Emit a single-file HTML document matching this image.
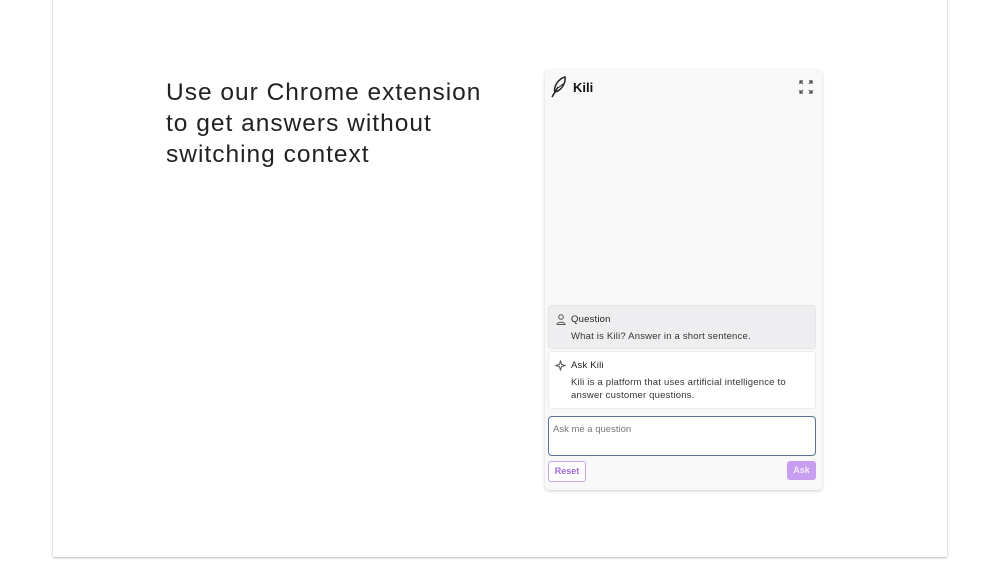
<!DOCTYPE html>
<html><head><style>
body{margin:0;width:1000px;height:563px;background:#fff;position:relative;overflow:hidden;font-family:"Liberation Sans",sans-serif}
.slide{position:absolute;left:53px;top:-2px;width:894px;height:559px;background:#fff;box-shadow:0 1px 2px rgba(0,0,0,.25),0 0 1px rgba(0,0,0,.15)}
.h{position:absolute;left:166px;top:77px;font-size:24.5px;line-height:31px;color:#222;letter-spacing:1px}
.panel{position:absolute;left:545px;top:70px;width:277px;height:420px;background:#f8f8f9;border-radius:4px;box-shadow:0 1px 3px rgba(0,0,0,.2)}
.title{position:absolute;left:28px;top:10px;font-size:13px;font-weight:bold;color:#111}
.box{position:absolute;left:3px;width:266px;border-radius:4px;font-size:9.5px;color:#333;letter-spacing:.2px}
.q{top:235px;height:42px;background:#eeeef0;border:1px solid #e4e4e6}
.a{top:281px;height:56px;background:#fff;border:1px solid #ececee}
.lbl{position:absolute;left:22px;top:8px;color:#222}
.txt{position:absolute;left:22px;top:24px;line-height:13px;width:240px}
.a .txt{width:236px}
.ta{position:absolute;left:3px;top:346px;width:266px;height:38px;border:1.5px solid #5b7290;border-radius:4px;background:#fff;font-size:9.5px;color:#777}
.btn{position:absolute;top:391px;height:19px;border-radius:3px;font-size:9px;font-weight:bold;line-height:19px;text-align:center}
</style></head><body>
<div class="slide"></div>
<div class="h">Use our Chrome extension<br>to get answers without<br>switching context</div>
<div class="panel">
<svg style="position:absolute;left:4px;top:5px" width="20" height="24" viewBox="0 0 20 24"><path d="M3 22 L9 12 M6 18 C4 12 9 4 16 2 C17 8 12 16 6 17" stroke="#222" stroke-width="1.5" fill="none"/><path d="M9 13 L14 9" stroke="#222" stroke-width="1"/></svg>
<div class="title">Kili</div>
<svg style="position:absolute;left:254px;top:10px" width="14" height="14" viewBox="0 0 14 14" stroke="#444" stroke-width="1.2" fill="none"><path d="M1 4V1h3M1 1l3 3M13 4V1h-3M13 1l-3 3M1 10v3h3M1 13l3-3M13 10v3h-3M13 13l-3-3"/></svg>
<div class="box q"><svg style="position:absolute;left:7px;top:8px" width="10" height="11" viewBox="0 0 10 11" stroke="#555" fill="none"><circle cx="5" cy="3" r="2.3"/><path d="M1 10.5c0-3 8-3 8 0z"/></svg><div class="lbl">Question</div><div class="txt">What is Kili? Answer in a short sentence.</div></div>
<div class="box a"><svg style="position:absolute;left:6px;top:8px" width="11" height="11" viewBox="0 0 11 11" stroke="#555" fill="none"><path d="M5.5 0.5L6.5 4.5 10.5 5.5 6.5 6.5 5.5 10.5 4.5 6.5 0.5 5.5 4.5 4.5z"/></svg><div class="lbl">Ask Kili</div><div class="txt">Kili is a platform that uses artificial intelligence to answer customer questions.</div></div>
<div class="ta"><div style="position:absolute;left:4px;top:7px">Ask me a question</div></div>
<div class="btn" style="left:3px;width:36px;border:1px solid #c9a6e8;color:#a06ad8;background:#fff">Reset</div>
<div class="btn" style="left:242px;width:29px;background:#c89ef0;color:#f4ecfc">Ask</div>
</div>
</body></html>
